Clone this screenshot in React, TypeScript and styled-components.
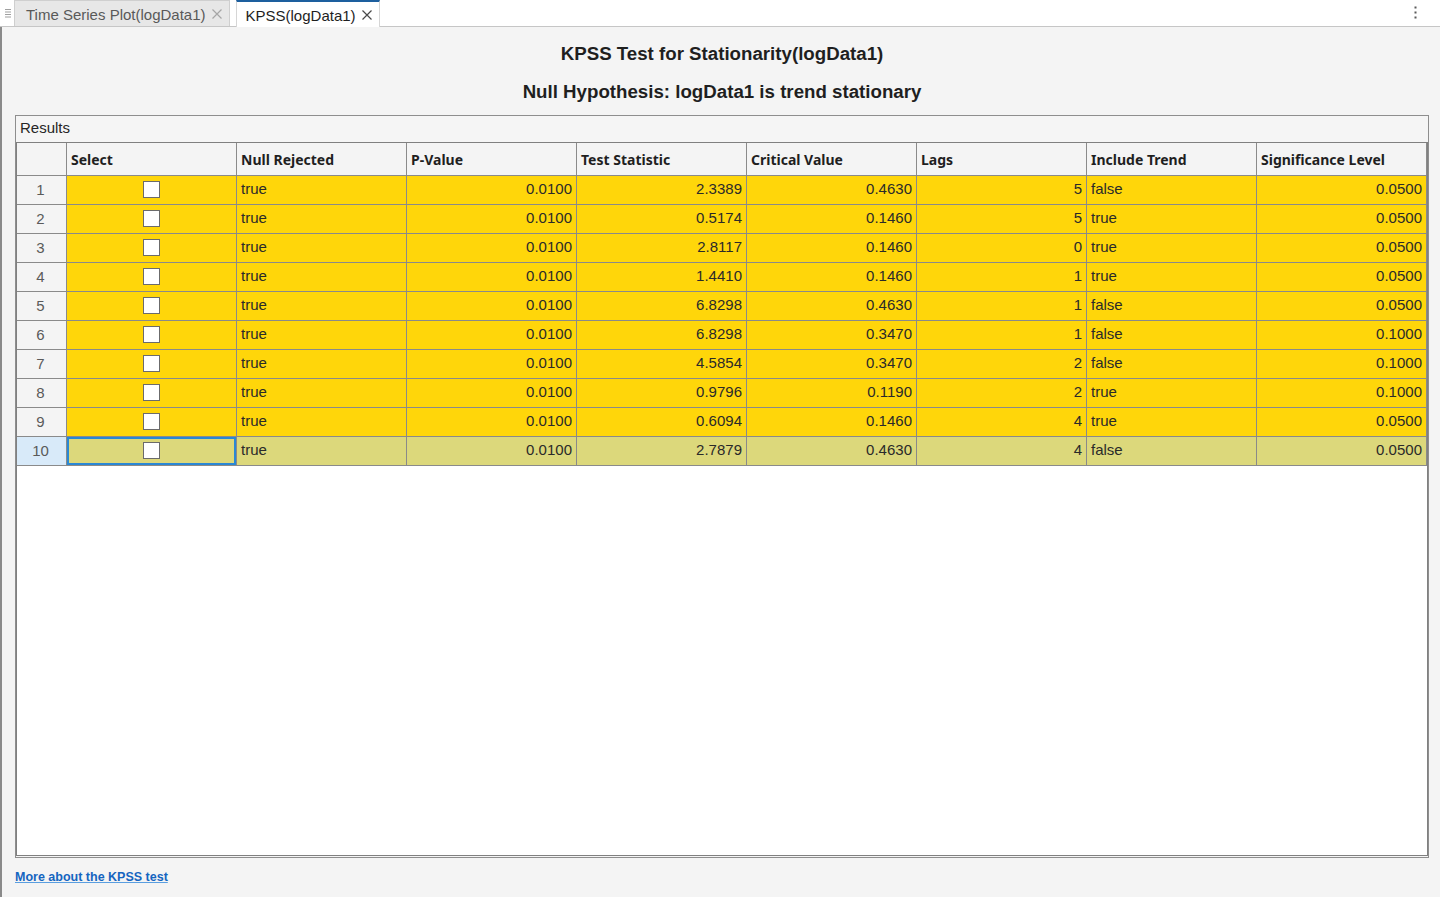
import React from "react";
import styled, { createGlobalStyle } from "styled-components";

const GlobalStyle = createGlobalStyle`
  html, body { margin: 0; padding: 0; }
  body {
    background: #f4f4f4;
    font-family: "Liberation Sans", Arial, sans-serif;
    overflow: hidden;
  }
  * { box-sizing: border-box; }
`;

const Root = styled.div`
  width: 1440px;
  height: 897px;
  display: flex;
  flex-direction: column;
  background: #f4f4f4;
`;

const TabBar = styled.div`
  height: 27px;
  flex: 0 0 27px;
  display: flex;
  align-items: stretch;
  background: #ffffff;
  border-bottom: 1px solid #c6c6c6;
`;

const Grip = styled.div`
  width: 14px;
  display: flex;
  align-items: center;
  justify-content: center;
  padding-left: 1px;
`;

const Tab = styled.div<{ $active?: boolean }>`
  display: flex;
  align-items: center;
  gap: 6px;
  padding: 1px 7px 0 ${(p) => (p.$active ? "9px" : "11px")};
  margin-right: ${(p) => (p.$active ? "0" : "6px")};
  font-size: 15px;
  color: ${(p) => (p.$active ? "#1e1e1e" : "#595959")};
  background: ${(p) => (p.$active ? "#ffffff" : "#e7e7e7")};
  border-left: 1px solid ${(p) => (p.$active ? "#d6d6d6" : "#cfcfcf")};
  border-right: 1px solid ${(p) => (p.$active ? "#d6d6d6" : "#cfcfcf")};
  border-top: ${(p) => (p.$active ? "2px solid #1d5f9e" : "1px solid #cfcfcf")};
  margin-bottom: ${(p) => (p.$active ? "-1px" : "0")};
  white-space: nowrap;
`;

const Spacer = styled.div`
  flex: 1;
`;

const Kebab = styled.div`
  width: 26px;
  display: flex;
  align-items: center;
  justify-content: flex-start;
  padding-bottom: 1px;
`;

const Main = styled.div`
  flex: 1;
  display: flex;
  flex-direction: column;
  border-left: 2px solid #8a8a8a;
  background: #f4f4f4;
`;

const Title = styled.div<{ $first?: boolean }>`
  text-align: center;
  font-weight: bold;
  font-size: 18.7px;
  line-height: 22px;
  color: #1f1f1f;
  margin-top: 16px;
  padding-left: 2px;
`;

const Panel = styled.div`
  margin: 12px 11px 0 13px;
  height: 743px;
  border: 1px solid #8e8e8e;
  padding-bottom: 1px;
  display: flex;
  flex-direction: column;
  background: #f5f5f5;
`;

const PanelTitle = styled.div`
  height: 26px;
  flex: 0 0 26px;
  font-size: 15px;
  line-height: 24px;
  padding-left: 4px;
  color: #262626;
`;

const Table = styled.div`
  flex: 1;
  border: 1px solid #808080;
  background: #ffffff;
  display: grid;
  grid-template-columns: 50px repeat(8, 170px);
  grid-auto-rows: 29px;
  grid-template-rows: 33px;
  align-content: start;
`;

const HeadCell = styled.div`
  background: #f4f4f4;
  border-right: 1px solid #8a8a8a;
  border-bottom: 1px solid #8a8a8a;
  font-family: "Noto Sans", "Liberation Sans", sans-serif;
  font-weight: 700;
  font-size: 14px;
  color: #1f1f1f;
  display: flex;
  align-items: center;
  padding: 1px 0 0 4px;
  white-space: nowrap;
`;

const RowHead = styled.div<{ $selected?: boolean }>`
  background: ${(p) => (p.$selected ? "#d8eaf9" : "#f4f4f4")};
  border-right: 1px solid #8a8a8a;
  border-bottom: 1px solid #8a8a8a;
  color: #5a5a5a;
  font-size: 15px;
  display: flex;
  align-items: center;
  justify-content: center;
  padding: 0 2px 2px 0;
`;

const Cell = styled.div<{ $selected?: boolean; $align?: "left" | "right" | "center"; $focus?: boolean }>`
  background: ${(p) => (p.$selected ? "#dcd87b" : "#ffd60a")};
  border-right: 1px solid #8a8a8a;
  border-bottom: 1px solid #8a8a8a;
  color: #2a2a2a;
  font-size: 15px;
  display: flex;
  align-items: center;
  justify-content: ${(p) =>
    p.$align === "right" ? "flex-end" : p.$align === "center" ? "center" : "flex-start"};
  padding: 0 4px ${(p) => (p.$align === "center" ? "1px" : "3px")} 4px;
  box-shadow: ${(p) => (p.$focus ? "inset 0 0 0 2px #2a88d4" : "none")};
  white-space: nowrap;
`;

const CheckBox = styled.span`
  width: 17px;
  height: 17px;
  background: #ffffff;
  border: 1px solid #6b6b6b;
  display: inline-block;
`;

const Footer = styled.div`
  padding: 9px 0 0 13px;
`;

const Link = styled.a`
  font-size: 12.5px;
  font-weight: bold;
  color: #1565c0;
  text-decoration: underline;
  text-decoration-color: #5a9ee0;
  cursor: pointer;
`;

type Row = {
  p: string;
  stat: string;
  crit: string;
  lags: number;
  trend: string;
  sig: string;
};

const rows: Row[] = [
  { p: "0.0100", stat: "2.3389", crit: "0.4630", lags: 5, trend: "false", sig: "0.0500" },
  { p: "0.0100", stat: "0.5174", crit: "0.1460", lags: 5, trend: "true", sig: "0.0500" },
  { p: "0.0100", stat: "2.8117", crit: "0.1460", lags: 0, trend: "true", sig: "0.0500" },
  { p: "0.0100", stat: "1.4410", crit: "0.1460", lags: 1, trend: "true", sig: "0.0500" },
  { p: "0.0100", stat: "6.8298", crit: "0.4630", lags: 1, trend: "false", sig: "0.0500" },
  { p: "0.0100", stat: "6.8298", crit: "0.3470", lags: 1, trend: "false", sig: "0.1000" },
  { p: "0.0100", stat: "4.5854", crit: "0.3470", lags: 2, trend: "false", sig: "0.1000" },
  { p: "0.0100", stat: "0.9796", crit: "0.1190", lags: 2, trend: "true", sig: "0.1000" },
  { p: "0.0100", stat: "0.6094", crit: "0.1460", lags: 4, trend: "true", sig: "0.0500" },
  { p: "0.0100", stat: "2.7879", crit: "0.4630", lags: 4, trend: "false", sig: "0.0500" },
];

const headers = [
  "Select",
  "Null Rejected",
  "P-Value",
  "Test Statistic",
  "Critical Value",
  "Lags",
  "Include Trend",
  "Significance Level",
];

const CloseIcon = ({ color }: { color: string }) => (
  <svg width="10" height="10" viewBox="0 0 10 10">
    <path d="M0.5 0.5 L9.5 9.5 M9.5 0.5 L0.5 9.5" stroke={color} strokeWidth="1.2" fill="none" />
  </svg>
);

const GripIcon = () => (
  <svg width="6" height="9" viewBox="0 0 6 9">
    <rect x="0" y="0" width="6" height="1" fill="#a0a0a0" />
    <rect x="0" y="2.5" width="6" height="1" fill="#a0a0a0" />
    <rect x="0" y="5" width="6" height="1" fill="#a0a0a0" />
    <rect x="0" y="7.5" width="6" height="1" fill="#a0a0a0" />
  </svg>
);

const KebabIcon = () => (
  <svg width="3" height="13" viewBox="0 0 3 13">
    <rect x="0.5" y="0.5" width="2" height="2" fill="#5a5a5a" />
    <rect x="0.5" y="5.5" width="2" height="2" fill="#5a5a5a" />
    <rect x="0.5" y="10.5" width="2" height="2" fill="#5a5a5a" />
  </svg>
);

export default function App() {
  return (
    <Root>
      <GlobalStyle />
      <TabBar>
        <Grip>
          <GripIcon />
        </Grip>
        <Tab>
          Time Series Plot(logData1)
          <CloseIcon color="#a6a6a6" />
        </Tab>
        <Tab $active>
          KPSS(logData1)
          <CloseIcon color="#4a4a4a" />
        </Tab>
        <Spacer />
        <Kebab>
          <KebabIcon />
        </Kebab>
      </TabBar>
      <Main>
        <Title $first>KPSS Test for Stationarity(logData1)</Title>
        <Title>Null Hypothesis: logData1 is trend stationary</Title>
        <Panel>
          <PanelTitle>Results</PanelTitle>
          <Table>
            <HeadCell />
            {headers.map((h) => (
              <HeadCell key={h}>{h}</HeadCell>
            ))}
            {rows.map((r, i) => {
              const sel = i === rows.length - 1;
              return (
                <React.Fragment key={i}>
                  <RowHead $selected={sel}>{i + 1}</RowHead>
                  <Cell $selected={sel} $align="center" $focus={sel}>
                    <CheckBox />
                  </Cell>
                  <Cell $selected={sel}>true</Cell>
                  <Cell $selected={sel} $align="right">{r.p}</Cell>
                  <Cell $selected={sel} $align="right">{r.stat}</Cell>
                  <Cell $selected={sel} $align="right">{r.crit}</Cell>
                  <Cell $selected={sel} $align="right">{r.lags}</Cell>
                  <Cell $selected={sel}>{r.trend}</Cell>
                  <Cell $selected={sel} $align="right">{r.sig}</Cell>
                </React.Fragment>
              );
            })}
          </Table>
        </Panel>
        <Footer>
          <Link>More about the KPSS test</Link>
        </Footer>
      </Main>
    </Root>
  );
}
